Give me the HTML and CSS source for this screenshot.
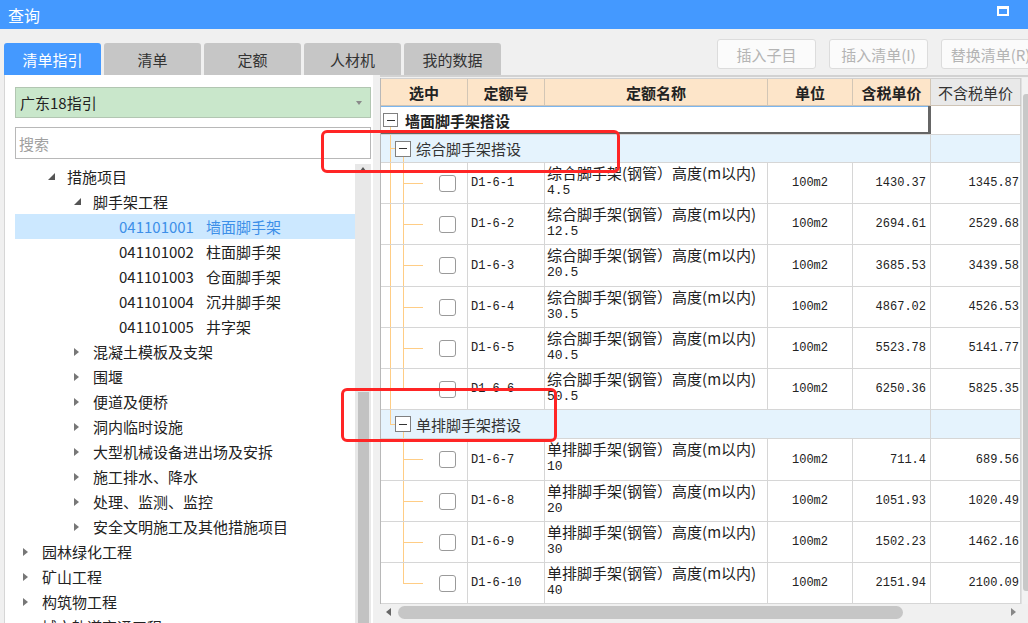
FILE: index.html
```html
<!DOCTYPE html>
<html lang="zh-CN">
<head>
<meta charset="utf-8">
<title>查询</title>
<link rel="stylesheet" href="styles.css">
</head>
<body>
<div class="titlebar">
  <span class="title">查询</span>
  <span class="max-icon"></span>
</div>
<div class="toolbar">
  <div class="tabs">
    <div class="tab active">清单指引</div>
    <div class="tab">清单</div>
    <div class="tab">定额</div>
    <div class="tab">人材机</div>
    <div class="tab">我的数据</div>
  </div>
  <div class="actions">
    <div class="btn">插入子目</div>
    <div class="btn">插入清单(I)</div>
    <div class="btn">替换清单(R)</div>
  </div>
</div>
<div class="main">
  <div class="left">
    <div class="select"><span>广东18指引</span><span class="caret"></span></div>
    <div class="search">搜索</div>
    <div class="tree-wrap">
      <div class="tree">
        <div class="node lv1"><span class="tw open"></span>措施项目</div>
        <div class="node lv2"><span class="tw open"></span>脚手架工程</div>
        <div class="node lv3 sel"><span class="code">041101001</span>墙面脚手架</div>
        <div class="node lv3"><span class="code">041101002</span>柱面脚手架</div>
        <div class="node lv3"><span class="code">041101003</span>仓面脚手架</div>
        <div class="node lv3"><span class="code">041101004</span>沉井脚手架</div>
        <div class="node lv3"><span class="code">041101005</span>井字架</div>
        <div class="node lv2"><span class="tw closed"></span>混凝土模板及支架</div>
        <div class="node lv2"><span class="tw closed"></span>围堰</div>
        <div class="node lv2"><span class="tw closed"></span>便道及便桥</div>
        <div class="node lv2"><span class="tw closed"></span>洞内临时设施</div>
        <div class="node lv2"><span class="tw closed"></span>大型机械设备进出场及安拆</div>
        <div class="node lv2"><span class="tw closed"></span>施工排水、降水</div>
        <div class="node lv2"><span class="tw closed"></span>处理、监测、监控</div>
        <div class="node lv2"><span class="tw closed"></span>安全文明施工及其他措施项目</div>
        <div class="node lv0"><span class="tw closed"></span>园林绿化工程</div>
        <div class="node lv0"><span class="tw closed"></span>矿山工程</div>
        <div class="node lv0"><span class="tw closed"></span>构筑物工程</div>
        <div class="node lv0"><span class="tw closed"></span>城市轨道交通工程</div>
      </div>
      <div class="vscroll"><span class="up"></span><span class="thumb"></span></div>
    </div>
  </div>
  <div class="right">
    <div class="grid-area">
      <div class="table">
        <div class="row head">
          <div class="c">选中</div>
          <div class="c">定额号</div>
          <div class="c">定额名称</div>
          <div class="c">单位</div>
          <div class="c">含税单价</div>
          <div class="c plain">不含税单价</div>
        </div>
        <div class="row g1">
          <div class="c span focus ln-g1"><span class="box b1"></span><span class="gt1">墙面脚手架搭设</span></div>
          <div class="c"></div>
        </div>
        <div class="row g2">
          <div class="c span ln-g2a"><span class="box b2"></span><span class="gt2">综合脚手架搭设</span></div>
          <div class="c"></div>
        </div>
        <div class="row d h41">
          <div class="c c-sel ln-a"><span class="chk"></span></div>
          <div class="c c-code">D1-6-1</div>
          <div class="c c-name"><span class="n1">综合脚手架(钢管）高度(m以内)</span><span class="n2">4.5</span></div>
          <div class="c c-unit">100m2</div>
          <div class="c c-num">1430.37</div>
          <div class="c c-num last">1345.87</div>
        </div>
        <div class="row d h41">
          <div class="c c-sel ln-a"><span class="chk"></span></div>
          <div class="c c-code">D1-6-2</div>
          <div class="c c-name"><span class="n1">综合脚手架(钢管）高度(m以内)</span><span class="n2">12.5</span></div>
          <div class="c c-unit">100m2</div>
          <div class="c c-num">2694.61</div>
          <div class="c c-num last">2529.68</div>
        </div>
        <div class="row d h42">
          <div class="c c-sel ln-a"><span class="chk"></span></div>
          <div class="c c-code">D1-6-3</div>
          <div class="c c-name"><span class="n1">综合脚手架(钢管）高度(m以内)</span><span class="n2">20.5</span></div>
          <div class="c c-unit">100m2</div>
          <div class="c c-num">3685.53</div>
          <div class="c c-num last">3439.58</div>
        </div>
        <div class="row d h41">
          <div class="c c-sel ln-a"><span class="chk"></span></div>
          <div class="c c-code">D1-6-4</div>
          <div class="c c-name"><span class="n1">综合脚手架(钢管）高度(m以内)</span><span class="n2">30.5</span></div>
          <div class="c c-unit">100m2</div>
          <div class="c c-num">4867.02</div>
          <div class="c c-num last">4526.53</div>
        </div>
        <div class="row d h41">
          <div class="c c-sel ln-a"><span class="chk"></span></div>
          <div class="c c-code">D1-6-5</div>
          <div class="c c-name"><span class="n1">综合脚手架(钢管）高度(m以内)</span><span class="n2">40.5</span></div>
          <div class="c c-unit">100m2</div>
          <div class="c c-num">5523.78</div>
          <div class="c c-num last">5141.77</div>
        </div>
        <div class="row d h41">
          <div class="c c-sel ln-a-last"><span class="chk"></span></div>
          <div class="c c-code">D1-6-6</div>
          <div class="c c-name"><span class="n1">综合脚手架(钢管）高度(m以内)</span><span class="n2">50.5</span></div>
          <div class="c c-unit">100m2</div>
          <div class="c c-num">6250.36</div>
          <div class="c c-num last">5825.35</div>
        </div>
        <div class="row g2 h29">
          <div class="c span ln-g2b"><span class="box b2"></span><span class="gt2">单排脚手架搭设</span></div>
          <div class="c"></div>
        </div>
        <div class="row d h42">
          <div class="c c-sel ln-b"><span class="chk"></span></div>
          <div class="c c-code">D1-6-7</div>
          <div class="c c-name"><span class="n1">单排脚手架(钢管）高度(m以内)</span><span class="n2">10</span></div>
          <div class="c c-unit">100m2</div>
          <div class="c c-num">711.4</div>
          <div class="c c-num last">689.56</div>
        </div>
        <div class="row d h41">
          <div class="c c-sel ln-b"><span class="chk"></span></div>
          <div class="c c-code">D1-6-8</div>
          <div class="c c-name"><span class="n1">单排脚手架(钢管）高度(m以内)</span><span class="n2">20</span></div>
          <div class="c c-unit">100m2</div>
          <div class="c c-num">1051.93</div>
          <div class="c c-num last">1020.49</div>
        </div>
        <div class="row d h41">
          <div class="c c-sel ln-b"><span class="chk"></span></div>
          <div class="c c-code">D1-6-9</div>
          <div class="c c-name"><span class="n1">单排脚手架(钢管）高度(m以内)</span><span class="n2">30</span></div>
          <div class="c c-unit">100m2</div>
          <div class="c c-num">1502.23</div>
          <div class="c c-num last">1462.16</div>
        </div>
        <div class="row d h41">
          <div class="c c-sel ln-b-last"><span class="chk"></span></div>
          <div class="c c-code">D1-6-10</div>
          <div class="c c-name"><span class="n1">单排脚手架(钢管）高度(m以内)</span><span class="n2">40</span></div>
          <div class="c c-unit">100m2</div>
          <div class="c c-num">2151.94</div>
          <div class="c c-num last">2100.09</div>
        </div>
      </div>
      <div class="vbar"><span class="vthumb"></span></div>
    </div>
    <div class="hscroll">
      <span class="arr-l"></span>
      <span class="hthumb"></span>
      <span class="arr-r"></span>
    </div>
  </div>
</div>
<div class="mark mark-1"></div>
<div class="mark mark-2"></div>
</body>
</html>
```
FILE: styles.css
```css
* { box-sizing: border-box; }

body {
  margin: 0;
  width: 1028px;
  height: 623px;
  overflow: hidden;
  background: #f0f0f0;
  font-family: "Noto Sans CJK SC", "Microsoft YaHei", sans-serif;
  color: #222;
  position: relative;
}

/* title bar */
.titlebar {
  height: 29px;
  background: #4499ff;
  display: flex;
  align-items: center;
  justify-content: space-between;
  padding: 0 19px 0 8px;
}
.title { color: #fff; font-size: 16px; line-height: 1; }
.max-icon {
  width: 12px;
  height: 10px;
  border: 2px solid #fff;
  border-top-width: 3px;
  align-self: flex-start;
  margin-top: 6px;
}

/* toolbar */
.toolbar {
  height: 46px;
  display: flex;
  align-items: flex-start;
  flex-wrap: nowrap;
}
.tabs { display: flex; gap: 3px; margin: 14px 0 0 4px; flex: none; }
.tab {
  width: 97px;
  height: 32px;
  background: #c6c6c6;
  border-radius: 3px 3px 0 0;
  display: flex;
  align-items: center;
  justify-content: center;
  font-size: 15px;
  color: #333;
}
.tab.active { background: #4499ff; color: #fff; }
.actions { display: flex; gap: 13px; margin: 10px 0 0 216px; flex: none; }
.btn {
  width: 99px;
  height: 30px;
  flex: none;
  border: 1px solid #dcdcdc;
  border-radius: 3px;
  background: #fbfbfb;
  color: #b4b4b4;
  font-size: 15px;
  display: flex;
  align-items: center;
  justify-content: center;
  white-space: nowrap;
}

/* main */
.main { display: flex; height: 548px; }

.left {
  width: 369px;
  margin-left: 4px;
  background: #fff;
  border-left: 1px solid #d6d6d6;
  padding: 12px 2px 0 10px;
  display: flex;
  flex-direction: column;
}
.select {
  height: 31px;
  flex: none;
  background: #c9e7cb;
  border: 1px solid #b2c6b2;
  display: flex;
  align-items: center;
  justify-content: space-between;
  padding: 0 8px 0 4px;
  font-size: 15px;
}
.caret {
  width: 0;
  height: 0;
  border-left: 3.5px solid transparent;
  border-right: 3.5px solid transparent;
  border-top: 4px solid #8a8a8a;
}
.search {
  height: 32px;
  flex: none;
  margin-top: 9px;
  border: 1px solid #b8b8b8;
  font-size: 15px;
  color: #a0a0a0;
  padding-left: 3px;
  display: flex;
  align-items: center;
}
.tree-wrap { margin-top: 5px; flex: 1; display: flex; overflow: hidden; min-height: 0; }
.tree { width: 340px; flex: none; }
.node {
  height: 25px;
  display: flex;
  align-items: center;
  font-size: 15px;
  white-space: nowrap;
  color: #222;
}
.lv0 { padding-left: 8px; }
.lv1 { padding-left: 33px; }
.lv2 { padding-left: 59px; }
.lv3 { padding-left: 104px; }
.node.sel { background: #cce8ff; color: #3d8fe8; }
.code { margin-right: 12px; }
.tw { width: 7px; margin-right: 12px; flex: none; display: flex; align-items: center; }
.tw.open::before {
  content: "";
  width: 0;
  height: 0;
  border-left: 7px solid transparent;
  border-bottom: 7px solid #555;
}
.tw.closed::before {
  content: "";
  width: 0;
  height: 0;
  border-left: 5px solid #777;
  border-top: 4.5px solid transparent;
  border-bottom: 4.5px solid transparent;
}
.vscroll {
  width: 16px;
  flex: none;
  background: #e8e8e8;
  display: flex;
  flex-direction: column;
  align-items: center;
}
.vscroll .up {
  margin-top: 3px;
  width: 0;
  height: 0;
  border-left: 3px solid transparent;
  border-right: 3px solid transparent;
  border-bottom: 4px solid #555;
}
.vscroll .thumb {
  width: 11px;
  height: 300px;
  margin-top: 221px;
  background: #c2c2c2;
  flex: none;
}

/* right panel */
.right {
  margin-left: 7px;
  flex: 1;
  min-width: 0;
  border-top: 2px solid #d2d2d2;
  padding-top: 1px;
  display: flex;
  flex-direction: column;
}
.grid-area { display: flex; height: 526px; flex: none; }
.table {
  width: 641px;
  flex: none;
  background: #fff;
  border-left: 1px solid #b8b8b8;
  overflow: hidden;
}
.row {
  display: grid;
  grid-template-columns: 87px 77px 223px 85px 78px 90px;
  border-bottom: 1px solid #d6d6d6;
}
.c {
  border-right: 1px solid #d6d6d6;
  display: flex;
  align-items: center;
  min-width: 0;
  overflow: hidden;
  white-space: nowrap;
}
.head {
  height: 28px;
  background: #fde5c9;
  font-weight: bold;
  font-size: 15px;
  border-top: 1px solid #d0d0d0;
  border-bottom-color: #cfc4b6;
  color: #222;
}
.head .c { justify-content: center; border-right-color: #d2c6b6; }
.head .c.plain { background: #e9e9e9; font-weight: normal; color: #333; border-right-color: #cfcfcf; }

.span { grid-column: 1 / 6; }
.g1 { height: 29px; }
.g1 .gt1 { font-weight: bold; font-size: 15px; margin-left: 7px; }
.focus { box-shadow: inset -2px -2px 0 #666, inset 0 1px 0 #7cb6ee; border-right-color: #666; }
.g2 { height: 28px; background: #e5f3fd; }
.h29 { height: 29px; }
.g2 .gt2 { font-size: 15px; margin-left: 5px; color: #333; }
.box {
  flex: none;
  border: 1px solid #808080;
  background: #fff;
  display: flex;
  align-items: center;
  justify-content: center;
}
.box::before { content: ""; width: 8px; height: 1px; background: #333; }
.b1 { width: 15px; height: 14px; margin-left: 2px; }
.b2 { width: 16px; height: 16px; margin-left: 14px; }

.d { font-size: 12px; }
.h41 { height: 41px; }
.h42 { height: 42px; }
.c-sel { justify-content: flex-end; padding-right: 11px; }
.chk {
  width: 17px;
  height: 17px;
  border: 1px solid #9a9a9a;
  border-radius: 3px;
  background: #fff;
}
.c-code { padding-left: 3px; font-family: "Liberation Mono", monospace; font-size: 12px; color: #222; }
.c-name {
  display: block;
  padding: 1px 0 0 2px;
  font-size: 15px;
  line-height: 17.5px;
  color: #222;
}
.c-name .n1, .c-name .n2 { display: block; }
.c-name .n2 { font-family: "Liberation Mono", monospace; font-size: 13px; }
.c-unit { justify-content: center; font-family: "Liberation Mono", monospace; font-size: 12px; }
.c-num { justify-content: flex-end; padding-right: 4px; font-family: "Liberation Mono", monospace; font-size: 12px; }
.c-num.last { padding-right: 1px; }

/* tree connector lines */
.ln-g1 {
  background: linear-gradient(#ffcd85, #ffcd85) 9px 20px / 1px 100% no-repeat;
}
.ln-g2a {
  background:
    linear-gradient(#ffcd85, #ffcd85) 9px 0 / 1px 100% no-repeat,
    linear-gradient(#ffcd85, #ffcd85) 9px 13px / 5px 1px no-repeat,
    linear-gradient(#ffcd85, #ffcd85) 22px 21px / 1px 100% no-repeat;
}
.ln-g2b {
  background:
    linear-gradient(#ffcd85, #ffcd85) 9px 0 / 1px 14px no-repeat,
    linear-gradient(#ffcd85, #ffcd85) 9px 14px / 5px 1px no-repeat,
    linear-gradient(#ffcd85, #ffcd85) 22px 22px / 1px 100% no-repeat;
}
.ln-a {
  background:
    linear-gradient(#ffcd85, #ffcd85) 9px 0 / 1px 100% no-repeat,
    linear-gradient(#ffcd85, #ffcd85) 22px 0 / 1px 100% no-repeat,
    linear-gradient(#ffcd85, #ffcd85) 22px 20px / 20px 1px no-repeat;
}
.ln-a-last {
  background:
    linear-gradient(#ffcd85, #ffcd85) 9px 0 / 1px 100% no-repeat,
    linear-gradient(#ffcd85, #ffcd85) 22px 0 / 1px 20px no-repeat,
    linear-gradient(#ffcd85, #ffcd85) 22px 20px / 20px 1px no-repeat;
}
.ln-b {
  background:
    linear-gradient(#ffcd85, #ffcd85) 22px 0 / 1px 100% no-repeat,
    linear-gradient(#ffcd85, #ffcd85) 22px 20px / 20px 1px no-repeat;
}
.ln-b-last {
  background:
    linear-gradient(#ffcd85, #ffcd85) 22px 0 / 1px 20px no-repeat,
    linear-gradient(#ffcd85, #ffcd85) 22px 20px / 20px 1px no-repeat;
}

/* right vertical scrollbar (cut off) */
.vbar { width: 7px; flex: none; background: #f2f2f2; border-left: 1px solid #e0e0e0; }
.vthumb {
  display: block;
  width: 6px;
  height: 497px;
  margin: 16px 0 0 1px;
  background: #c8c8c8;
  border-radius: 3px 0 0 3px;
}

/* horizontal scrollbar */
.hscroll {
  height: 16px;
  flex: none;
  display: flex;
  align-items: center;
  background: #f0f0f0;
}
.arr-l {
  margin-left: 6px;
  width: 0;
  height: 0;
  border-right: 5px solid #666;
  border-top: 4px solid transparent;
  border-bottom: 4px solid transparent;
}
.hthumb {
  margin-left: 7px;
  width: 505px;
  height: 13px;
  border-radius: 7px;
  background: #c6c6c6;
}
.arr-r {
  margin-left: auto;
  margin-right: 12px;
  width: 0;
  height: 0;
  border-left: 5px solid #888;
  border-top: 4px solid transparent;
  border-bottom: 4px solid transparent;
}

/* red annotation boxes */
.mark {
  position: absolute;
  border: 3px solid #ff2525;
  border-radius: 6px;
}
.mark-1 { left: 321px; top: 130px; width: 299px; height: 43px; }
.mark-2 { left: 341px; top: 388px; width: 216px; height: 54px; }
```
